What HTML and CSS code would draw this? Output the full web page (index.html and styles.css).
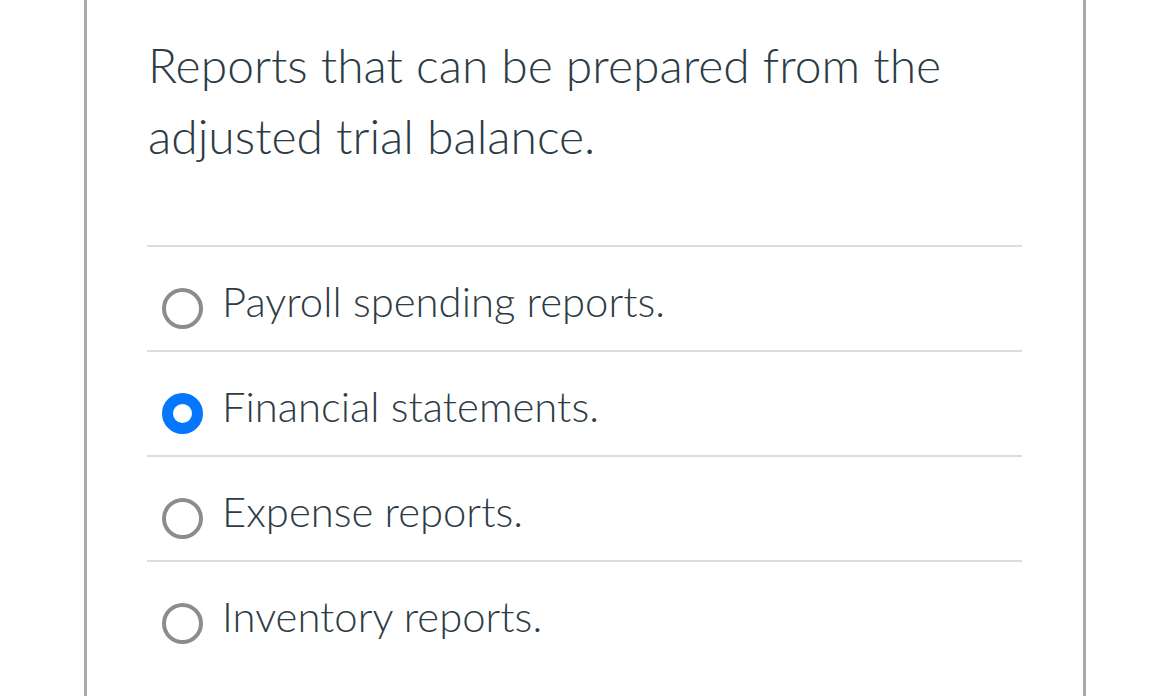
FILE: index.html
```html
<!DOCTYPE html>
<html>
<head>
<meta charset="utf-8">
<link rel="stylesheet" href="styles.css">
</head>
<body>
<div class="card">
  <p class="question">Reports that can be prepared from the adjusted trial balance.</p>
  <ul class="options">
    <li class="option"><span class="radio"></span><span class="label">Payroll spending reports.</span></li>
    <li class="option"><span class="radio checked"></span><span class="label">Financial statements.</span></li>
    <li class="option"><span class="radio"></span><span class="label">Expense reports.</span></li>
    <li class="option"><span class="radio"></span><span class="label">Inventory reports.</span></li>
  </ul>
</div>
</body>
</html>
```

FILE: styles.css
```css
html, body {
  margin: 0;
  padding: 0;
  background: #ffffff;
  overflow: hidden;
}
body {
  font-family: Lato, "Noto Sans", sans-serif;
  color: #2d3b45;
}
.card {
  margin-left: 84px;
  width: 1002px;
  min-height: 696px;
  border-left: 3px solid #a9a9a9;
  border-right: 3px solid #a9a9a9;
  padding: 29px 61px 0 60px;
  box-sizing: border-box;
}
.question {
  margin: 0;
  font-size: 48px;
  line-height: 71px;
  font-weight: 300;
  padding-left: 1px;
  max-width: 860px;
}
.options {
  list-style: none;
  margin: 74px 0 0 0;
  padding: 0;
}
.option {
  display: flex;
  align-items: flex-start;
  border-top: 2px solid #dddddd;
  padding: 28px 0 21px 0;
}
.radio {
  flex: none;
  width: 41px;
  height: 41px;
  box-sizing: border-box;
  border-radius: 50%;
  border: 4px solid #8c8c8c;
  margin: 13px 0 0 15px;
  background: #fff;
}
.radio.checked {
  border: 11px solid #0577ff;
}
.label {
  font-size: 41.8px;
  line-height: 53px;
  font-weight: 300;
  margin-left: 19px;
}
```
